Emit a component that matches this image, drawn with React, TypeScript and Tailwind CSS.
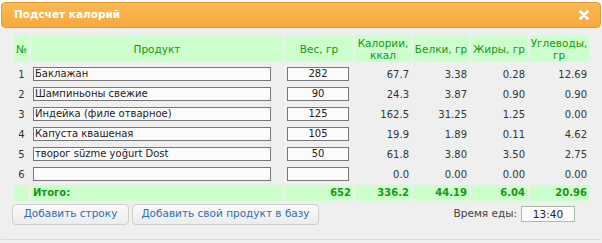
import React from "react";

const cols = "grid grid-cols-[15px_252px_68px_56px_56px_56px_60px] gap-x-[2px]";

const rows = [
  { n: 1, name: "Баклажан", w: "282", k: "67.7", b: "3.38", f: "0.28", c: "12.69" },
  { n: 2, name: "Шампиньоны свежие", w: "90", k: "24.3", b: "3.87", f: "0.90", c: "0.90" },
  { n: 3, name: "Индейка (филе отварное)", w: "125", k: "162.5", b: "31.25", f: "1.25", c: "0.00" },
  { n: 4, name: "Капуста квашеная", w: "105", k: "19.9", b: "1.89", f: "0.11", c: "4.62" },
  { n: 5, name: "творог süzme yoğurt Dost", w: "50", k: "61.8", b: "3.80", f: "3.50", c: "2.75" },
  { n: 6, name: "", w: "", k: "0.0", b: "0.00", f: "0.00", c: "0.00" },
];

export default function App() {
  return (
    <div
      className="w-[602px] h-[243px] bg-[#efefef] text-[11px] text-[#333] overflow-hidden"
      style={{ fontFamily: '"DejaVu Sans", sans-serif' }}
    >
      <div className="pt-[2px] px-[1px] bg-white">
        <div className="h-[26px] rounded-[4px] border border-[#e9982b] bg-gradient-to-b from-[#fabb55] to-[#f6a83c] flex items-center justify-between pl-[12px] pr-[11px]">
          <span className="text-white font-bold text-[10.5px]">Подсчет калорий</span>
          <svg width="10" height="10" viewBox="0 0 10 10">
            <path d="M1.5 1.5 L8.5 8.5 M8.5 1.5 L1.5 8.5" stroke="white" strokeWidth="2.8" strokeLinecap="round" />
          </svg>
        </div>
      </div>
      <div className="pl-[14px] pt-[7px]">
        <div className={cols + " h-[27px] text-[#139913] text-[10.5px] leading-[12px]"}>
          <div className="bg-[#ccffcc] flex items-center justify-center">№</div>
          <div className="bg-[#ccffcc] flex items-center justify-center">Продукт</div>
          <div className="bg-[#ccffcc] flex items-center justify-center">Вес, гр</div>
          <div className="bg-[#ccffcc] flex items-center justify-center text-center">Калории,<br />ккал</div>
          <div className="bg-[#ccffcc] flex items-center justify-center">Белки, гр</div>
          <div className="bg-[#ccffcc] flex items-center justify-center">Жиры, гр</div>
          <div className="bg-[#ccffcc] flex items-center justify-center text-center">Углеводы,<br />гр</div>
        </div>
        <div className="pt-[2px]">
          {rows.map((r) => (
            <div key={r.n} className={cols + " h-[20px] items-center text-[10px]"}>
              <div className="text-center text-[#333]">{r.n}</div>
              <div className="pl-[2px]">
                <div className="w-[238px] h-[14px] border border-[#777] bg-[#fbfbfb] text-[#222] leading-[12px] pl-[1px] whitespace-nowrap overflow-hidden">
                  {r.name}
                </div>
              </div>
              <div className="pl-[2px]">
                <div className="w-[62px] h-[14px] border border-[#777] bg-[#fbfbfb] text-[#222] leading-[12px] text-center">
                  {r.w}
                </div>
              </div>
              <div className="text-right pr-[2px]">{r.k}</div>
              <div className="text-right pr-[2px]">{r.b}</div>
              <div className="text-right pr-[2px]">{r.f}</div>
              <div className="text-right pr-[2px]">{r.c}</div>
            </div>
          ))}
        </div>
        <div className={cols + " h-[16px] mt-[1px] text-[#139913] font-bold text-[10px] leading-[16px]"}>
          <div className="bg-[#ccffcc]"></div>
          <div className="bg-[#ccffcc] pl-[2px]">Итого:</div>
          <div className="bg-[#ccffcc] text-right pr-[2px]">652</div>
          <div className="bg-[#ccffcc] text-right pr-[2px]">336.2</div>
          <div className="bg-[#ccffcc] text-right pr-[2px]">44.19</div>
          <div className="bg-[#ccffcc] text-right pr-[2px]">6.04</div>
          <div className="bg-[#ccffcc] text-right pr-[2px]">20.96</div>
        </div>
      </div>
      <div className="flex items-center pl-[12px] pt-[2px] h-[24px]">
        <button className="h-[21px] w-[117px] rounded-[4px] border border-[#cfcfcf] bg-gradient-to-b from-[#fafafa] to-[#ececec] text-[#2e6fb3] text-[10.5px]">
          Добавить строку
        </button>
        <button className="ml-[3px] h-[21px] w-[187px] rounded-[4px] border border-[#cfcfcf] bg-gradient-to-b from-[#fafafa] to-[#ececec] text-[#2e6fb3] text-[10.5px]">
          Добавить свой продукт в базу
        </button>
        <div className="ml-auto mr-[27px] flex items-center text-[10.5px]">
          <span className="text-[#444]">Время еды:</span>
          <div className="ml-[4px] w-[54px] h-[16px] border border-[#a9bfa9] bg-[#fbfbfb] text-center leading-[14px] text-[#223]">
            13:40
          </div>
        </div>
      </div>
      <div className="mt-[14px] mx-[1px] border-t border-[#dcdcdc]"></div>
    </div>
  );
}
